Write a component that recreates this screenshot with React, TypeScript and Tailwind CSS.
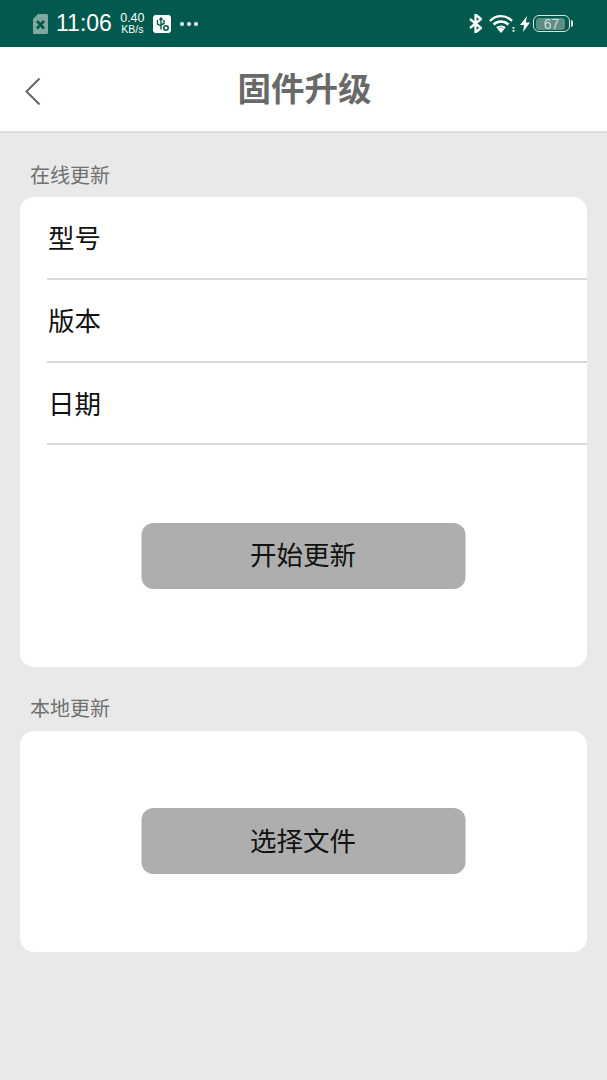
import React from "react";

const cjk = "font-['Noto_Sans_CJK_SC','Noto_Sans',sans-serif]";

function SimIcon() {
  return (
    <svg width="15" height="20" viewBox="0 0 15 20">
      <path d="M5 0H13.500A1.500 1.500 0 0 1 15 1.500V18.500A1.500 1.500 0 0 1 13.500 20H1.500A1.500 1.500 0 0 1 0 18.500V5Z" fill="#7fa8a0" />
      <path d="M4 7l7 7.500M11 7l-7 7.500" stroke="#02594d" strokeWidth="2.600" />
    </svg>
  );
}

function UsbIcon() {
  return (
    <svg width="18" height="18" viewBox="0 0 18 18">
      <rect width="18" height="18" rx="3" fill="#fff" />
      <path d="M8 2.500v12M8 2.500L6.500 5M8 2.500L9.500 5M4.500 5v4l3.500 2M11 5v3.500L8 10" stroke="#02594d" strokeWidth="1.400" fill="none" />
      <circle cx="13" cy="13" r="2.200" fill="none" stroke="#02594d" strokeWidth="1.600" />
    </svg>
  );
}

function Bluetooth() {
  return (
    <svg width="13" height="19" viewBox="0 0 13 19">
      <path d="M1 5l11 9-5.500 4.500V.500L12 5 1 14" fill="none" stroke="#fff" strokeWidth="2.300" />
    </svg>
  );
}

function Wifi() {
  return (
    <svg width="26" height="19" viewBox="0 0 26 19">
      <path d="M1 7C7 .500 17 .500 23 7M4.500 10.500c4.500-4 10.500-4 15 0M8 14c2.200-1.800 5.800-1.800 8 0" fill="none" stroke="#fff" strokeWidth="2.400" />
      <path d="M8.500 15c2-1.500 5-1.500 7 0L12 19Z" fill="#fff" />
      <path d="M24.500 13v1.800M24.500 16v1.800" stroke="#fff" strokeWidth="1.800" />
    </svg>
  );
}

function Bolt() {
  return (
    <svg width="10" height="16" viewBox="0 0 10 16">
      <path d="M7 0L0 9H4L3 16L10 6.500H5.800Z" fill="#fff" />
    </svg>
  );
}

function Battery() {
  return (
    <div className="flex items-center gap-[1px]">
      <div className="relative flex h-[17px] w-[37px] items-center justify-center overflow-hidden rounded-[6px] border-[1.5px] border-[#d5e4e0]">
        <div className="absolute inset-y-[1.5px] left-[1.5px] w-[29px] rounded-[3px] bg-[#5f8c84]" />
        <span className="relative font-['Liberation_Sans',sans-serif] text-[14px] leading-none text-[#cfe0dc]">67</span>
      </div>
      <div className="h-[7px] w-[2px] rounded-r-sm bg-[#d5e4e0]" />
    </div>
  );
}

function StatusBar() {
  return (
    <div className="flex h-[47px] items-center justify-between bg-[#02594d] pl-[33px] pr-[34px] font-['Liberation_Sans',sans-serif] text-white">
      <div className="flex items-center">
        <SimIcon />
        <span className="ml-[8px] text-[23px] leading-none">11:06</span>
        <div className="ml-[7px] flex w-[27px] flex-col items-center text-center leading-none">
          <span className="text-[12.500px] leading-[12px]">0.40</span>
          <span className="text-[10.500px] leading-[11px]">KB/s</span>
        </div>
        <div className="ml-[7px]">
          <UsbIcon />
        </div>
        <div className="ml-[9px] flex gap-[3px]">
          <span className="size-[4px] rounded-full bg-white" />
          <span className="size-[4px] rounded-full bg-white" />
          <span className="size-[4px] rounded-full bg-white" />
        </div>
      </div>
      <div className="flex items-center">
        <Bluetooth />
        <div className="ml-[7px]">
          <Wifi />
        </div>
        <div className="ml-[5px]">
          <Bolt />
        </div>
        <div className="ml-[3px]">
          <Battery />
        </div>
      </div>
    </div>
  );
}

function Row({ label }: { label: string }) {
  return (
    <div className="ml-[27px] flex h-[82.5px] items-center border-b-2 border-[#d8d8d8] text-[26.500px] leading-none text-[#111]">
      <span className="ml-px">{label}</span>
    </div>
  );
}

function GrayButton({ label }: { label: string }) {
  return (
    <button className="flex h-[66px] w-[324px] -translate-x-[0.5px] items-center justify-center rounded-[12px] bg-[#aeaeae] pb-[2px] text-[26.500px] leading-none text-[#111]">
      {label}
    </button>
  );
}

export default function App() {
  return (
    <div className={`flex h-[1080px] w-[607px] flex-col bg-[#e9e9e9] ${cjk}`}>
      <StatusBar />
      <header className="relative flex h-[86px] items-center justify-center border-b-2 border-[#dcdcdc] bg-white pb-[4px]">
        <svg className="absolute left-[24px] top-[30px]" width="18" height="28" viewBox="0 0 18 28">
          <path d="M15.500 1.500L2.500 14.500l13 13" fill="none" stroke="#666" strokeWidth="2" />
        </svg>
        <h1 className="translate-x-[1px] text-[33.500px] font-bold leading-none text-[#696969]">固件升级</h1>
      </header>
      <div className="px-[20px]">
        <p className="ml-[10px] mt-[28px] h-[36px] text-[20px] leading-[28px] text-[#707070]">在线更新</p>
        <section className="h-[470px] rounded-[14px] bg-white">
          <Row label="型号" />
          <div className="pt-[0.5px]">
            <Row label="版本" />
          </div>
          <Row label="日期" />
          <div className="mt-[77.500px] flex justify-center">
            <GrayButton label="开始更新" />
          </div>
        </section>
        <p className="ml-[10px] mt-[26px] h-[38px] text-[20px] leading-[30px] text-[#707070]">本地更新</p>
        <section className="flex h-[221px] items-center justify-center rounded-[14px] bg-white pb-[1px]">
          <GrayButton label="选择文件" />
        </section>
      </div>
    </div>
  );
}
